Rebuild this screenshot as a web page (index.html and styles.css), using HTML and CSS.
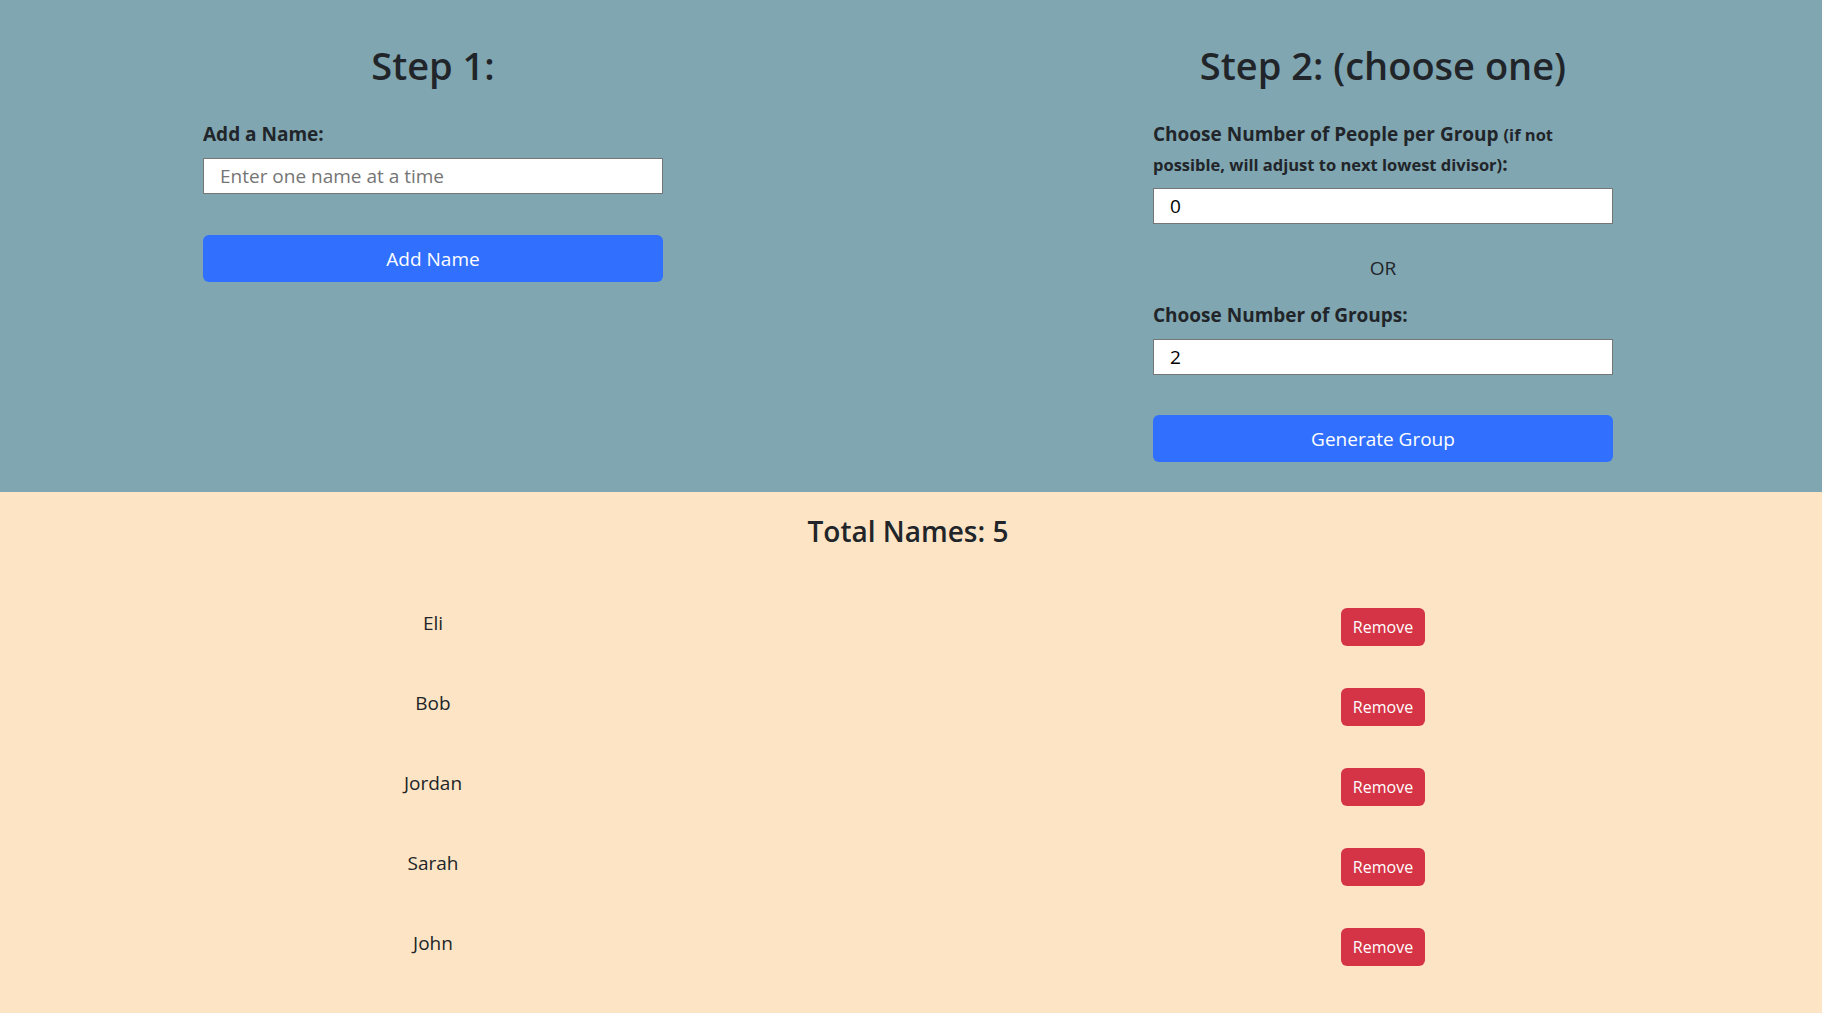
FILE: index.html
```html
<!DOCTYPE html>
<html lang="en">
<head>
<meta charset="utf-8">
<title>Group Generator</title>
<link rel="stylesheet" href="styles.css">
</head>
<body>
<main class="page">
  <section class="setup">
    <div class="step">
      <h1 class="step-title">Step 1:</h1>
      <label class="field-label" for="name-input">Add a Name:</label>
      <input class="field" id="name-input" type="text" placeholder="Enter one name at a time">
      <button class="btn-primary btn-add" type="button">Add Name</button>
    </div>
    <div class="step">
      <h1 class="step-title">Step 2: (choose one)</h1>
      <label class="field-label" for="per-group">Choose Number of People per Group <small class="note">(if not possible, will adjust to next lowest divisor)</small>:</label>
      <input class="field" id="per-group" type="number" value="0">
      <p class="or">OR</p>
      <label class="field-label field-label-tight" for="group-count">Choose Number of Groups:</label>
      <input class="field" id="group-count" type="number" value="2">
      <button class="btn-primary btn-generate" type="button">Generate Group</button>
    </div>
  </section>
  <section class="names">
    <h2 class="total">Total Names: 5</h2>
    <ul class="name-list">
      <li class="name-row"><span class="name">Eli</span><button class="btn-remove" type="button">Remove</button></li>
      <li class="name-row"><span class="name">Bob</span><button class="btn-remove" type="button">Remove</button></li>
      <li class="name-row"><span class="name">Jordan</span><button class="btn-remove" type="button">Remove</button></li>
      <li class="name-row"><span class="name">Sarah</span><button class="btn-remove" type="button">Remove</button></li>
      <li class="name-row"><span class="name">John</span><button class="btn-remove" type="button">Remove</button></li>
    </ul>
  </section>
</main>
</body>
</html>
```

FILE: styles.css
```css
html, body {
  margin: 0;
  padding: 0;
}

body {
  background: #fde4c4;
  color: #212529;
  font-family: "Open Sans", "Noto Sans", sans-serif;
  min-height: 100vh;
}

.setup {
  background: #80a6b1;
  display: grid;
  grid-template-columns: 1fr 1fr;
  column-gap: 86px;
  padding: 41px 7px 30px 1px;
}

.step {
  width: 460px;
  justify-self: center;
  display: flex;
  flex-direction: column;
}

.step-title {
  margin: 0;
  font-size: 38px;
  font-weight: 560;
  line-height: 48px;
  text-align: center;
}

.field-label {
  margin-top: 30px;
  font-size: 19px;
  font-weight: 700;
  line-height: 30px;
}

.field-label-tight {
  margin-top: 17px;
}

.note {
  font-size: 16.5px;
  font-weight: 700;
  line-height: 1;
}

.field {
  margin-top: 9px;
  height: 36px;
  box-sizing: border-box;
  border: 1px solid #767676;
  border-radius: 0;
  padding: 0 16px;
  background: #fff;
  color: #000;
  font-family: "Open Sans", "Noto Sans", sans-serif;
  font-size: 19px;
  outline: none;
}

.field::placeholder {
  color: #757575;
}

.field::-webkit-inner-spin-button,
.field::-webkit-outer-spin-button {
  -webkit-appearance: none;
  margin: 0;
}

.field[type="number"] {
  -moz-appearance: textfield;
}

.or {
  margin: 29px 0 0;
  font-size: 19px;
  line-height: 30px;
  text-align: center;
}

.btn-primary {
  height: 47px;
  border: 0;
  border-radius: 6px;
  background: #3170ff;
  color: #fff;
  font-family: "Open Sans", "Noto Sans", sans-serif;
  font-size: 19px;
  cursor: pointer;
}

.btn-add {
  margin-top: 41px;
}

.btn-generate {
  margin-top: 40px;
}

.names {
  padding: 19px 7px 40px 1px;
}

.total {
  margin: 0;
  font-size: 28px;
  font-weight: 540;
  line-height: 40px;
  text-align: center;
}

.name-list {
  list-style: none;
  margin: 57px 0 0;
  padding: 0;
  display: flex;
  flex-direction: column;
  gap: 42px;
}

.name-row {
  display: grid;
  grid-template-columns: 1fr 1fr;
  column-gap: 86px;
  align-items: start;
}

.name {
  text-align: center;
  font-size: 19px;
  line-height: 30px;
}

.btn-remove {
  justify-self: center;
  height: 38px;
  padding: 0 12px;
  border: 0;
  border-radius: 6px;
  background: #d53446;
  color: #fff;
  font-family: "Open Sans", "Noto Sans", sans-serif;
  font-size: 16px;
  cursor: pointer;
}
```
